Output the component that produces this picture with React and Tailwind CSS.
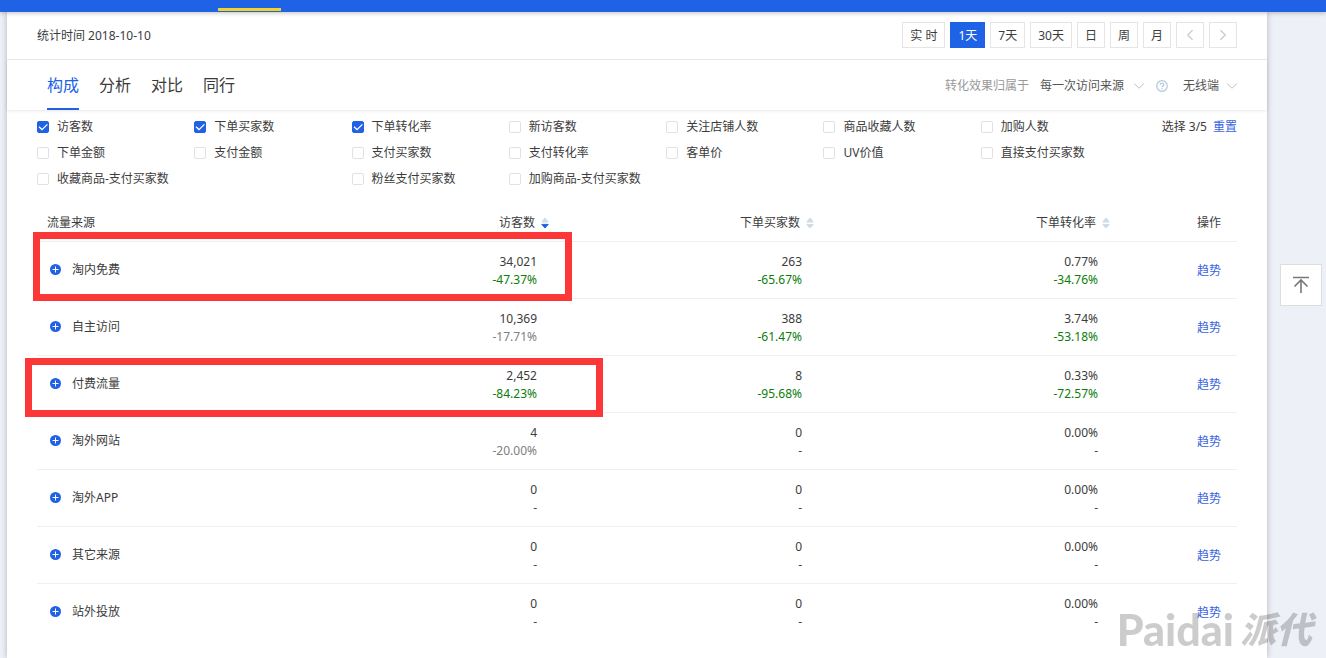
import { useState } from "react";
import clsx from "clsx";
import { ChevronDown, ChevronLeft, ChevronRight } from "lucide-react";

const periods = ["实 时", "1天", "7天", "30天", "日", "周", "月"];

const tabs = ["构成", "分析", "对比", "同行"];

// null keeps the grid cell empty
const metrics = [
  "访客数",
  "下单买家数",
  "下单转化率",
  "新访客数",
  "关注店铺人数",
  "商品收藏人数",
  "加购人数",
  "下单金额",
  "支付金额",
  "支付买家数",
  "支付转化率",
  "客单价",
  "UV价值",
  "直接支付买家数",
  "收藏商品-支付买家数",
  null,
  "粉丝支付买家数",
  "加购商品-支付买家数",
];

const columns = [
  { name: "访客数", width: "w-[265px]", sort: "desc" },
  { name: "下单买家数", width: "w-[265px]" },
  { name: "下单转化率", width: "w-[296px]" },
];

const rows = [
  { name: "淘内免费", cells: [["34,021", "-47.37%"], ["263", "-65.67%"], ["0.77%", "-34.76%"]] },
  { name: "自主访问", cells: [["10,369", "-17.71%", "muted"], ["388", "-61.47%"], ["3.74%", "-53.18%"]] },
  { name: "付费流量", cells: [["2,452", "-84.23%"], ["8", "-95.68%"], ["0.33%", "-72.57%"]] },
  { name: "淘外网站", cells: [["4", "-20.00%", "muted"], ["0", "-"], ["0.00%", "-"]] },
  { name: "淘外APP", cells: [["0", "-"], ["0", "-"], ["0.00%", "-"]] },
  { name: "其它来源", cells: [["0", "-"], ["0", "-"], ["0.00%", "-"]] },
  { name: "站外投放", cells: [["0", "-"], ["0", "-"], ["0.00%", "-"]] },
];

const changeColor = (change, tone) => {
  if (tone === "muted") return "text-[#808080]";
  return change === "-" ? "text-[#444]" : "text-[#0a7d0a]";
};

const SortIcon = ({ sort }) => (
  <svg width="8" height="12" viewBox="0 0 8 12" aria-hidden="true">
    <path d="M4 1 L7.2 5 H0.8 Z" fill="#cfdce6" stroke="#cfdce6" strokeLinejoin="round" />
    <path
      d="M4 11 L7.2 7.4 H0.8 Z"
      fill={sort === "desc" ? "#2062e6" : "#cfdce6"}
      stroke={sort === "desc" ? "#2062e6" : "#cfdce6"}
      strokeLinejoin="round"
    />
  </svg>
);

const PlusIcon = () => (
  <svg width="11" height="11" viewBox="0 0 11 11" aria-hidden="true">
    <circle cx="5.5" cy="5.5" r="5.5" fill="#2062e6" />
    <path d="M5.5 2.5 V8.5 M2.5 5.5 H8.5" stroke="#fff" />
  </svg>
);

const HelpIcon = () => (
  <svg width="12" height="12" viewBox="0 0 12 12" fill="none" stroke="#b4c6dc" aria-hidden="true">
    <circle cx="6" cy="6" r="5.3" strokeWidth="1.2" />
    <path d="M4.2 4.8 C4.2 2.5 7.8 2.5 7.8 4.7 C7.8 6 6 5.9 6 7.3" strokeWidth="1.2" />
    <path d="M6 8.2 V9.4" strokeWidth="1.2" />
  </svg>
);

const Metric = ({ name, checked, onChange }) => (
  <label className="flex h-[26px] items-center gap-2 whitespace-nowrap">
    <span className="relative flex">
      <input
        type="checkbox"
        checked={checked}
        onChange={onChange}
        className="h-3 w-3 appearance-none rounded-xs border border-[#dfe1e5] bg-white checked:border-[#2062e6] checked:bg-[#2062e6]"
      />
      {checked && (
        <svg className="pointer-events-none absolute inset-0" width="12" height="12" viewBox="0 0 12 12" fill="none">
          <path d="M2 5.8 L5 8.6 L10.4 3.4" stroke="#fff" strokeWidth="1.3" />
        </svg>
      )}
    </span>
    {name}
  </label>
);

const App = () => {
  const [period, setPeriod] = useState("1天");
  const [tab, setTab] = useState("构成");
  const [selected, setSelected] = useState(["访客数", "下单买家数", "下单转化率"]);

  const toggle = (name) =>
    setSelected((prev) => (prev.includes(name) ? prev.filter((m) => m !== name) : [...prev, name]));

  return (
    <div className="flex min-h-screen flex-col bg-[#edf0f6] font-['Noto_Sans','Noto_Sans_CJK_SC',sans-serif] text-xs text-[#3c3c3c]">
      {/* Top bar */}
      <nav className="relative z-10 h-3 bg-[#2062e6] pt-2 pl-[218px] shadow-[0_1px_4px_rgba(0,0,0,0.25)]">
        <div className="h-[3px] w-[63px] bg-[#f5d322]" />
      </nav>

      <main className="mr-[59px] ml-[7px] grow bg-white shadow-[0_0_6px_rgba(0,0,0,0.25)]">
        {/* Date and period */}
        <div className="flex h-12 items-center justify-between border-b border-[#ebebeb] px-[30px] pb-0.5">
          <p className="pt-0.5">统计时间 2018-10-10</p>
          <div className="flex gap-[5px]">
            {periods.map((p) => (
              <button
                key={p}
                type="button"
                onClick={() => setPeriod(p)}
                className={clsx(
                  "h-[26px] border px-[7px] pt-0.5",
                  p === period ? "border-[#2062e6] bg-[#2062e6] text-white" : "border-[#e5e5e5] bg-white"
                )}
              >
                {p}
              </button>
            ))}
            <button
              type="button"
              aria-label="上一天"
              className="flex h-[26px] w-7 items-center justify-center border border-[#e5e5e5] text-[#ccc]"
            >
              <ChevronLeft size={18} strokeWidth={1.75} />
            </button>
            <button
              type="button"
              aria-label="下一天"
              className="flex h-[26px] w-7 items-center justify-center border border-[#e5e5e5] text-[#ccc]"
            >
              <ChevronRight size={18} strokeWidth={1.75} />
            </button>
          </div>
        </div>

        {/* Tabs */}
        <div className="flex h-[50px] items-center justify-between pr-[30px] pl-10 shadow-[0_1px_3px_rgba(0,0,0,0.1)]">
          <div className="flex h-full gap-5 text-base">
            {tabs.map((t) => (
              <button
                key={t}
                type="button"
                onClick={() => setTab(t)}
                className={clsx(
                  "border-y-2 border-t-transparent",
                  t === tab ? "border-b-[#2062e6] text-[#2062e6]" : "border-b-transparent"
                )}
              >
                {t}
              </button>
            ))}
          </div>
          <div className="flex items-center pt-0.5">
            <label htmlFor="attribution" className="mr-[11px] text-[#999]">
              转化效果归属于
            </label>
            <div className="relative mr-3 flex items-center">
              <select id="attribution" className="w-[104px] appearance-none text-[#555]">
                <option>每一次访问来源</option>
              </select>
              <ChevronDown size={18} strokeWidth={1.25} className="pointer-events-none absolute -right-1 text-[#bbb]" />
            </div>
            <button type="button" aria-label="帮助" className="mr-[15px]">
              <HelpIcon />
            </button>
            <div className="relative flex items-center">
              <select aria-label="终端" className="w-[54px] appearance-none text-[#555]">
                <option>无线端</option>
              </select>
              <ChevronDown size={18} strokeWidth={1.25} className="pointer-events-none absolute -right-1 text-[#bbb]" />
            </div>
          </div>
        </div>

        {/* Metric picker */}
        <div className="flex items-start px-[30px] pt-1">
          <div className="grid grow grid-cols-7">
            {metrics.map((m, i) =>
              m ? (
                <Metric key={m} name={m} checked={selected.includes(m)} onChange={() => toggle(m)} />
              ) : (
                <span key={i} />
              )
            )}
          </div>
          <div className="flex h-[26px] w-[99px] items-center justify-end gap-[6px] whitespace-nowrap">
            <span>选择 {selected.length}/5</span>
            <button type="button" className="text-[#3a63e0]" onClick={() => setSelected([])}>
              重置
            </button>
          </div>
        </div>

        {/* Traffic sources */}
        <div className="relative mx-[30px] mt-3">
          <table className="w-full table-fixed border-collapse">
            <thead>
              <tr className="h-[37px] border-b border-[#efefef]">
                <th scope="col" className="pt-0.5 pl-[10px] text-left font-normal">
                  流量来源
                </th>
                {columns.map((c) => (
                  <th key={c.name} scope="col" className={clsx("pt-0.5 font-normal", c.width)}>
                    <button type="button" className="ml-auto flex items-center gap-[6px]">
                      {c.name}
                      <SortIcon sort={c.sort} />
                    </button>
                  </th>
                ))}
                <th scope="col" className="w-[127px] pt-0.5 pr-4 text-right font-normal">
                  操作
                </th>
              </tr>
            </thead>
            <tbody>
              {rows.map((row) => (
                <tr key={row.name} className="h-[57px] border-b border-[#efefef] last:border-b-0">
                  <td className="pl-[13px]">
                    <button type="button" className="flex items-center gap-[11px]">
                      <PlusIcon />
                      {row.name}
                    </button>
                  </td>
                  {row.cells.map(([value, change, tone], i) => (
                    <td key={i} className="pt-[3px] pr-3 text-right leading-[18px]">
                      <div>{value}</div>
                      <div className={changeColor(change, tone)}>{change}</div>
                    </td>
                  ))}
                  <td className="pt-0.5 pr-4 text-right">
                    <a href="#trend" className="text-[#3a63e0]">
                      趋势
                    </a>
                  </td>
                </tr>
              ))}
            </tbody>
          </table>

          {/* Highlight frames */}
          <div className="pointer-events-none absolute top-7 -left-1 h-[69px] w-[539px] border-7 border-[#fc3737]" />
          <div className="pointer-events-none absolute top-[154px] -left-3 h-[59px] w-[578px] border-7 border-[#fc3737]" />
        </div>
      </main>

      {/* Back to top */}
      <button
        type="button"
        aria-label="返回顶部"
        className="fixed top-[264px] right-1 flex h-[42px] w-[42px] items-center justify-center border border-[#ddd] bg-white"
      >
        <svg width="18" height="18" viewBox="0 0 18 18" fill="none" stroke="#777" strokeWidth="1.6">
          <path d="M1 1.5 H17 M9 17 V4 M2.5 10.5 L9 4 L15.5 10.5" />
        </svg>
      </button>

      {/* Watermark */}
      <div className="pointer-events-none fixed right-[14px] bottom-1 flex items-center gap-[6px] leading-[48px] text-black/20">
        <span className="font-['Lato',sans-serif] text-[43px] font-black">Paidai</span>
        <span className="text-[36px] font-black italic">派代</span>
      </div>
    </div>
  );
};

export default App;
